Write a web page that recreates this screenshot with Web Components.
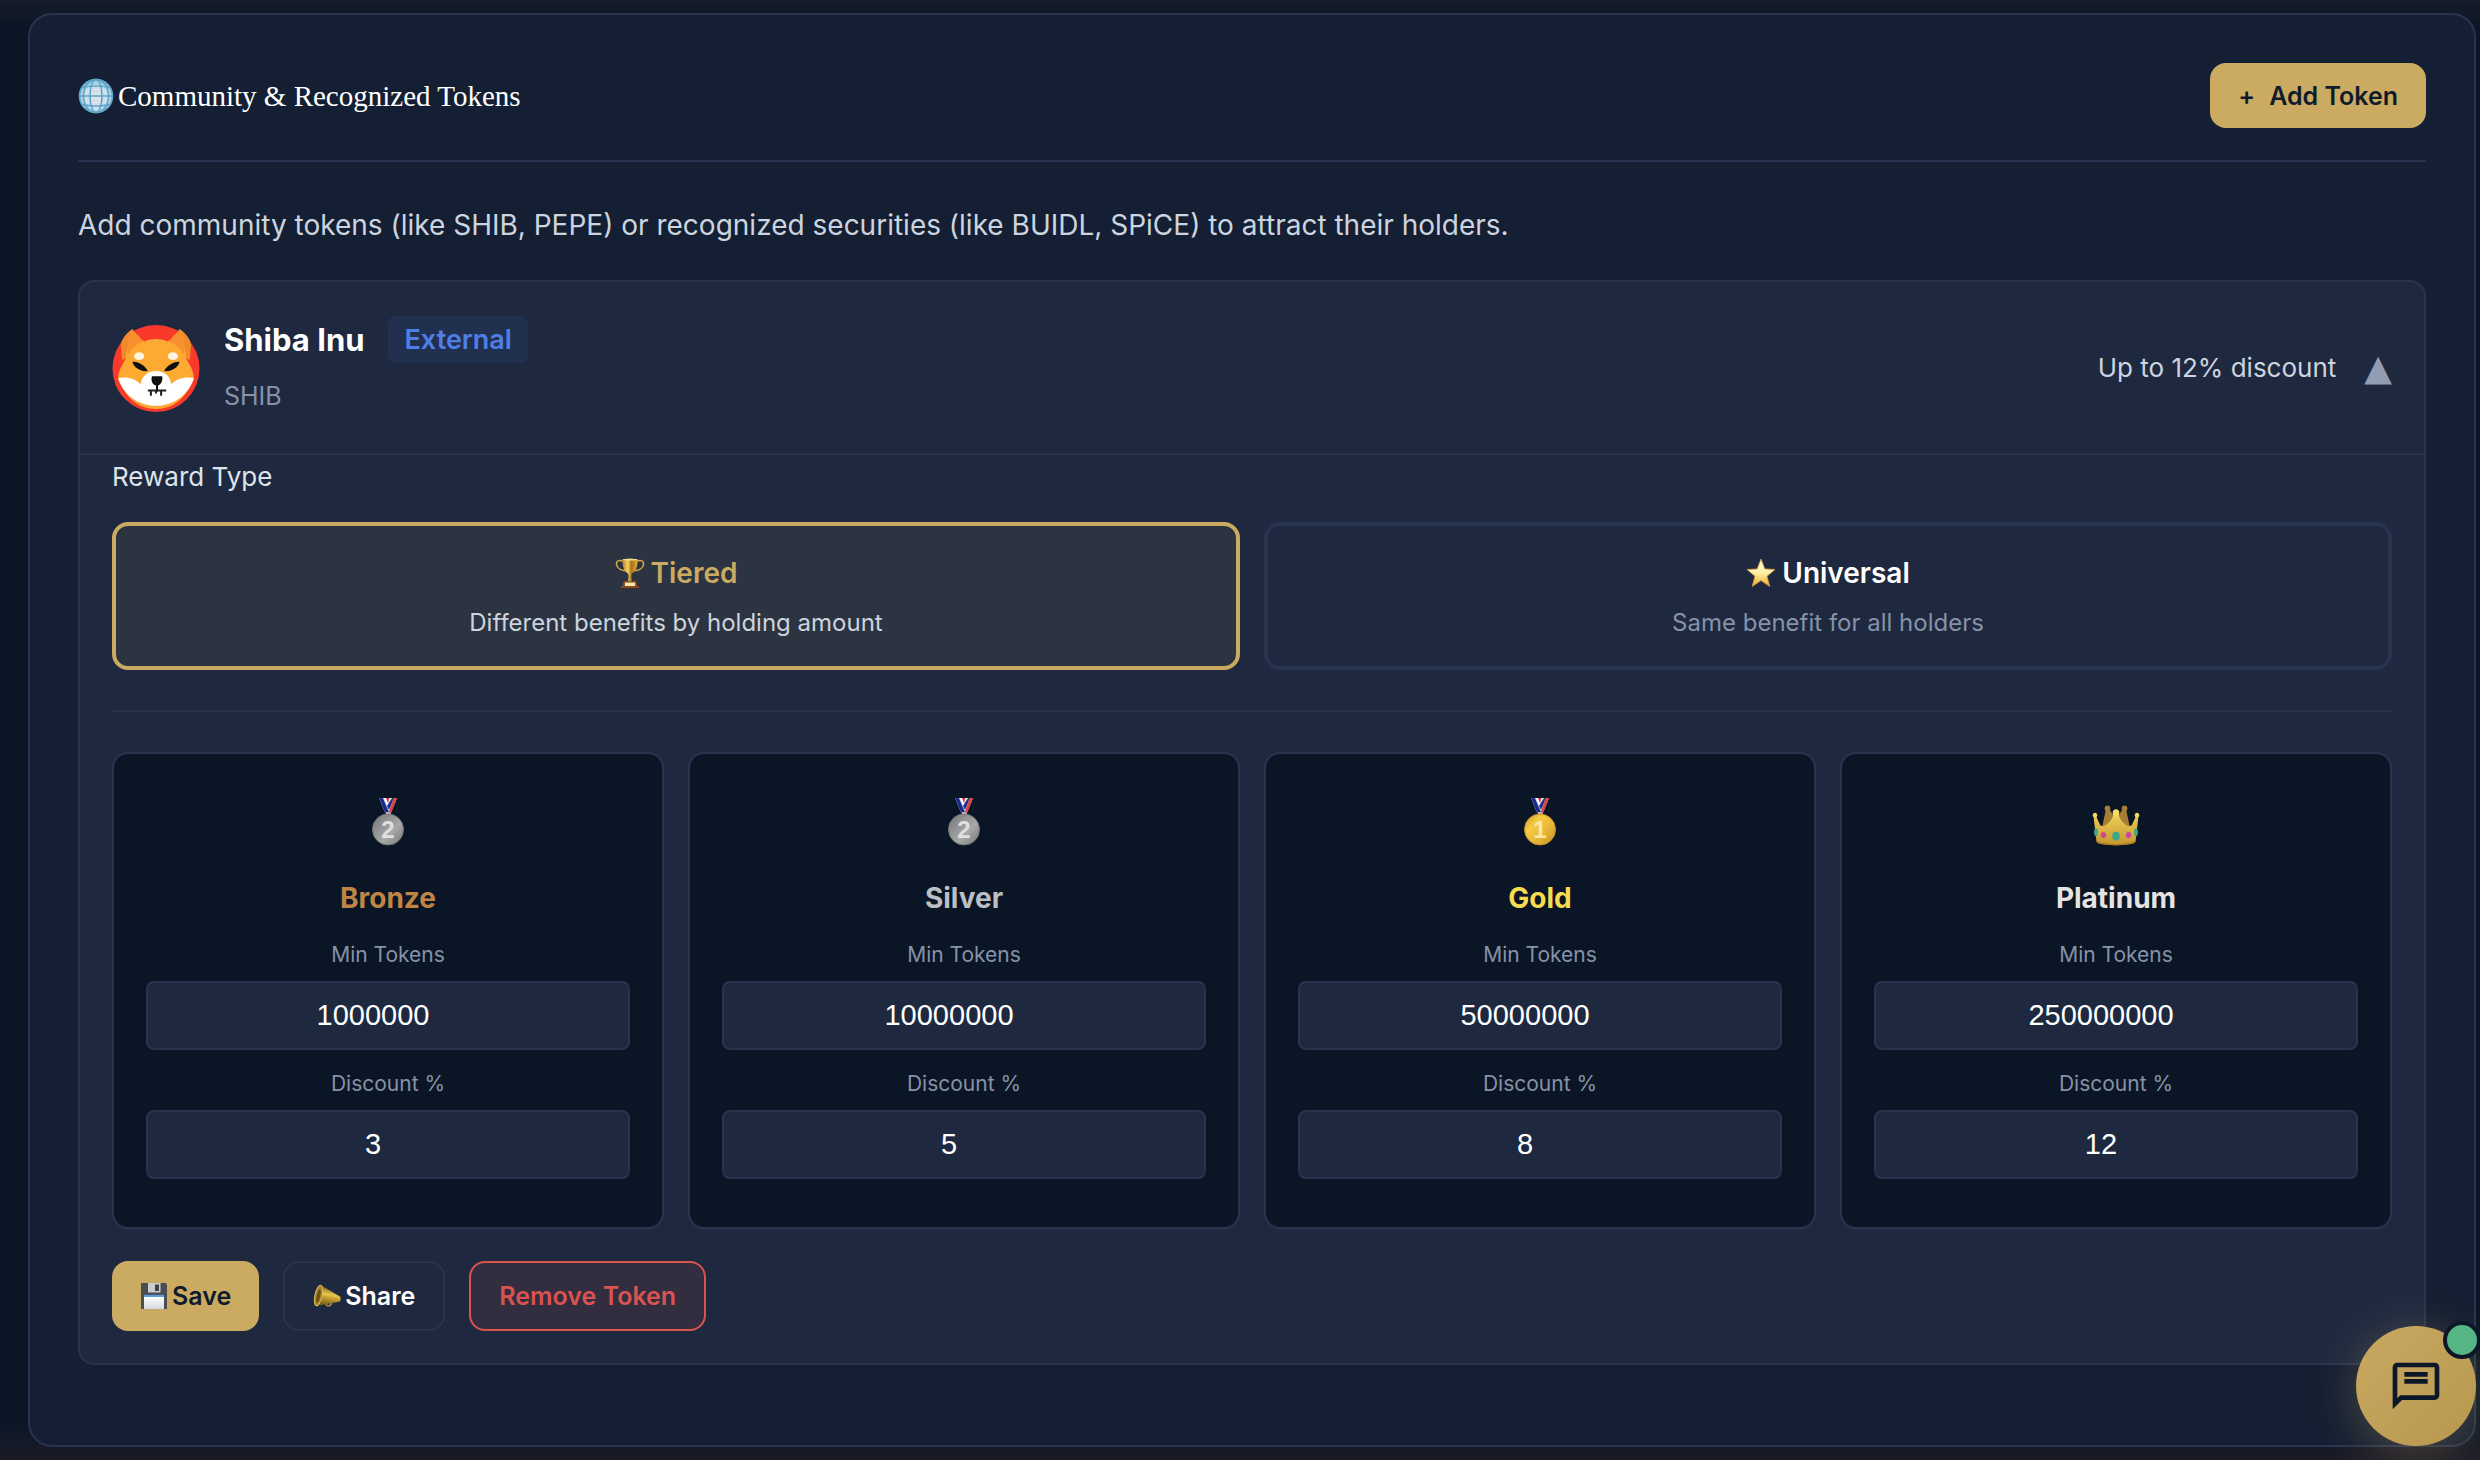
<!DOCTYPE html>
<html lang="en">
<head>
<meta charset="utf-8">
<meta name="viewport" content="width=device-width, initial-scale=1">
<title>Community &amp; Recognized Tokens</title>
<style>
  :root {
    --bg: #0a1626;
    --panel: #141f33;
    --card: #1e2940;
    --line: #28344f;
    --gold: #cbab62;
    --text: #ffffff;
    --soft: #ccd4df;
    --muted: #8592a8;
    --danger: #d9534f;
    --sans: Inter, "Liberation Sans", sans-serif;
    --serif: "Liberation Serif", serif;
  }
  * { box-sizing: border-box; }
  body {
    margin: 0;
    padding: 13px 4px 13px 28px;
    min-height: 100vh;
    background: linear-gradient(#171c28, transparent 28px), linear-gradient(to top, #1c1b28, transparent 36px), var(--bg);
    color: var(--text);
    font-family: var(--sans);
  }
</style>
</head>
<body>
<token-panel>
  <span slot="title">Community &amp; Recognized Tokens</span>
  <ui-button slot="action" variant="gold" wide><span>+</span><span>Add Token</span></ui-button>
  <p slot="intro">Add community tokens (like SHIB, PEPE) or recognized securities (like BUIDL, SPiCE) to attract their holders.</p>
  <token-card name="Shiba Inu" symbol="SHIB" origin="External" summary="Up to 12% discount">
    <reward-option slot="option" icon="trophy" label="Tiered" selected>Different benefits by holding amount</reward-option>
    <reward-option slot="option" icon="star" label="Universal">Same benefit for all holders</reward-option>
    <tier-card slot="tier" icon="silver" name="Bronze" color="#c08545" min="1000000" discount="3"></tier-card>
    <tier-card slot="tier" icon="silver" name="Silver" color="#bcbfc4" min="10000000" discount="5"></tier-card>
    <tier-card slot="tier" icon="gold" name="Gold" color="#f8db4f" min="50000000" discount="8"></tier-card>
    <tier-card slot="tier" icon="crown" name="Platinum" color="#e5e4e2" min="250000000" discount="12"></tier-card>
    <ui-button slot="action" variant="gold" tall><emoji-icon name="disk" size="28"></emoji-icon><span>Save</span></ui-button>
    <ui-button slot="action" variant="plain" tall><emoji-icon name="horn" size="28"></emoji-icon><span>Share</span></ui-button>
    <ui-button slot="action" variant="danger" tall><span>Remove Token</span></ui-button>
  </token-card>
</token-panel>
<chat-launcher></chat-launcher>

<script>
const ribbon = `
  <path fill="#f4f5f8" d="M11 0h18l-7 17h-4z"/>
  <path fill="#1c2a8c" d="M11 0h4l6 14-1 3h-2zM24 0h2l-5 12-2-4z"/>
  <path fill="#d8433c" d="M25.500 0H29l-6 15h-2.500zM18 0h3.500l-1.500 5z"/>
  <path fill="#b9b9b9" d="M18 14h4v4h-4z"/>`;

const medal = (light, mid, dark, ink, digit) => `
  <svg viewBox="0 0 40 48"><defs>
    <linearGradient id="g" x1="0" y1="0" x2="1" y2="1"><stop offset="0" stop-color="${dark}"/><stop offset=".3" stop-color="${mid}"/><stop offset=".6" stop-color="${light}"/><stop offset="1" stop-color="${dark}"/></linearGradient></defs>
    ${ribbon}
    <circle cx="20" cy="31.500" r="15.500" fill="url(#g)" stroke="${dark}" stroke-width="1"/>
    <text x="20" y="40" text-anchor="middle" font-family="Liberation Sans, sans-serif" font-weight="700" font-size="24" fill="${ink}">${digit}</text></svg>`;

const ICONS = {
  silver: medal('#a9a9a9', '#8f8f8f', '#757575', '#e0e0e0', 2),
  gold: medal('#e9b83a', '#f3cb42', '#c58f22', '#fbe9a0', 1),
  globe: `<svg viewBox="0 0 36 36"><defs><radialGradient id="g" cx=".5" cy=".55" r=".5"><stop offset="0" stop-color="#dde2e6"/><stop offset=".65" stop-color="#cfe0ea"/><stop offset="1" stop-color="#8fc9e4"/></radialGradient></defs>
    <circle cx="18" cy="18" r="17" fill="url(#g)"/>
    <g fill="none" stroke="#5fa5c9" stroke-width="1.600"><circle cx="18" cy="18" r="16.500"/><ellipse cx="18" cy="18" rx="6" ry="16.500"/><ellipse cx="18" cy="18" rx="12.500" ry="16.500"/><path d="M1.500 18h33M4 9.500q14-3 28 0M4 26.500q14 3 28 0"/></g></svg>`,
  trophy: `<svg viewBox="0 0 30 30"><defs><linearGradient id="g"><stop offset="0" stop-color="#b9801c"/><stop offset=".35" stop-color="#f7d267"/><stop offset=".6" stop-color="#a86f14"/><stop offset="1" stop-color="#e8b540"/></linearGradient></defs>
    <path fill="none" stroke="#d6a94c" stroke-width="1.500" d="M8.500 3.500C4 1.500 1 3 1.500 6.500S6 13 10.500 12.500M21.500 3.500C26 1.500 29 3 28.500 6.500S24 13 19.500 12.500"/>
    <path fill="url(#g)" d="M7.500 1h15c.3 7-1.500 12.500-5.500 14.500-.8 2-.8 5 .5 9.500h-5c1.300-4.500 1.300-7.500.5-9.500C9 13.500 7.200 8 7.500 1z"/>
    <ellipse cx="15" cy="1.600" rx="7.400" ry="1" fill="#f4dc92"/>
    <path fill="#f7e6b0" d="M9.500 24h11v4h-11z"/><path fill="#8a4a1c" d="M6 28h18v2H6zM9 23h12v1.500H9zM8 24.500h1.800V28H8zM20.200 24.500H22V28h-1.800z"/></svg>`,
  star: `<svg viewBox="0 0 30 30"><defs><linearGradient id="g" x1="0" y1="0" x2="0" y2="1"><stop offset="0" stop-color="#fffbe6"/><stop offset=".5" stop-color="#fdf0a6"/><stop offset="1" stop-color="#ecab2e"/></linearGradient></defs>
    <path fill="url(#g)" stroke="#d99a35" stroke-width=".8" stroke-linejoin="round" d="M15 1l3.800 9.900 10.200.6-8 6.700 2.800 10.300L15 22.600 6.200 28.500 9 18.200 1 11.500l10.200-.6z"/></svg>`,
  crown: `<svg viewBox="0 0 48 48"><defs><linearGradient id="g" x1="0" y1="0" x2="0" y2="1"><stop offset="0" stop-color="#f2d25a"/><stop offset="1" stop-color="#c3962f"/></linearGradient></defs>
    <g transform="translate(0 -1) scale(1 1.1)">
    <g fill="#a57f35"><path d="M5 20l5 8 4-17h3l7 9 7-9h3l4 17 5-8-3 20H8z"/><circle cx="15.500" cy="10.500" r="2.800"/><circle cx="32.500" cy="10.500" r="2.800"/></g>
    <path fill="url(#g)" d="M1.500 17h2.500l4 9c5 2 11-3 14.500-12h3c3.500 9 9.500 14 14.500 12l4-9h2.500L43.500 41c-3 4-36 4-39 0z"/>
    <g fill="#f6dc63"><circle cx="24" cy="14.500" r="3.300"/><circle cx="3" cy="16.500" r="2.200"/><circle cx="45" cy="16.500" r="2.200"/></g>
    <path fill="none" stroke="#a97c20" stroke-width="1" d="M5 40.500c6 3.500 32 3.500 38 0"/>
    <g fill="#3da883"><ellipse cx="24" cy="35.500" rx="3.800" ry="4"/><ellipse cx="4" cy="32" rx="1.900" ry="3.600"/><ellipse cx="44" cy="32" rx="1.900" ry="3.600"/></g>
    <g fill="#c9469c"><circle cx="11.500" cy="34.500" r="2.700"/><circle cx="36.500" cy="34.500" r="2.700"/></g></g></svg>`,
  disk: `<svg viewBox="0 0 28 28"><defs><linearGradient id="g" x1="0" y1="0" x2="0" y2="1"><stop offset="0" stop-color="#fff"/><stop offset="1" stop-color="#d5d9e0"/></linearGradient></defs>
    <path fill="#4a4d52" d="M1 1h24.500L27 2.500V27H1z"/><path fill="#c9ccd0" d="M8 1h12.500v9.500H8z"/><path fill="#3f4246" d="M15 2.500h4v6.500h-4z"/>
    <path fill="url(#g)" d="M4 14h20v13H4z"/><path fill="#5b9bdc" d="M4 12.800h20V15H4z"/></svg>`,
  horn: `<svg viewBox="0 0 28 28"><defs><linearGradient id="g" x1=".6" y1="0" x2=".4" y2="1"><stop offset=".1" stop-color="#7d5f14"/><stop offset=".45" stop-color="#e6c94e"/><stop offset=".6" stop-color="#c7a233"/><stop offset="1" stop-color="#6f5513"/></linearGradient></defs>
    <path fill="none" stroke="#a8863a" stroke-width="1.600" d="M12.500 21c1 4 5.500 4 6.500-1.500"/>
    <path fill="url(#g)" d="M7.500 3L27 14.500c.8 1.500.8 3.500 0 5L3.500 24z"/>
    <ellipse cx="5.500" cy="13.500" rx="3.600" ry="10.500" transform="rotate(12 5.500 13.500)" fill="#a8832a" stroke="#d9ba58" stroke-width="1"/>
    <ellipse cx="5.500" cy="14" rx="1.700" ry="7" transform="rotate(12 5.500 14)" fill="#6b4f12"/></svg>`,
  shiba: `<svg viewBox="0 0 86 86"><circle cx="43" cy="43.500" r="42.500" fill="#f93a2b"/>
    <path fill="#f08a2a" d="M20 5C12 10 7 19 9 24l1 12 20-18zM66 5c8 5 13 14 11 19l-1 12-20-18z"/>
    <path fill="#fdaa33" d="M18 14c8-1 14 3 14 3 7-3 15-3 22 0 0 0 6-4 14-3 2 6 4 14 5 21 4 6 7 13 7 18-8 20-20 30-37 30S14 73 6 53c0-5 3-12 7-18 1-7 3-15 5-21z"/>
    <path fill="#f9902e" d="M20 7c4 2 9 7 10 11-6 1-11 6-14 12-2-9 0-18 4-23zM66 7c-4 2-9 7-10 11 6 1 11 6 14 12 2-9 0-18-4-23z"/>
    <path fill="#fff" d="M6 53c8-2 17 0 22 6 1-8 7-13 15-13s14 5 15 13c5-6 14-8 22-6-4 14-18 27-37 27S10 67 6 53z"/>
    <g fill="#fff4dd"><ellipse cx="26.500" cy="31.500" rx="5" ry="3.800"/><ellipse cx="59.500" cy="31.500" rx="5" ry="3.800"/></g>
    <g fill="#111"><path d="M20 37c5-1 13 4 15 9-6 1-14-3-15-9zM66 37c-5-1-13 4-15 9 6 1 14-3 15-9z"/><path d="M39 51h10c1 4-1 8-4 9v6h-2v-6c-4-1-5-5-4-9z"/></g>
    <path fill="none" stroke="#222" stroke-width="2" d="M35 65h18M38 65v5M43 65v3M48 65v5"/></svg>`
};

const define = (name, template) => customElements.define(name, class extends HTMLElement {
  connectedCallback() {
    if (this.shadowRoot) return;
    const root = this.attachShadow({ mode: 'open' });
    root.innerHTML = '<style>*{box-sizing:border-box}</style>' + template(this);
  }
});

define('emoji-icon', el => `
  <style>
    :host { display: block; flex: none; width: ${el.getAttribute('size')}px; height: ${el.getAttribute('size')}px; }
    svg { display: block; width: 100%; height: 100%; overflow: visible; }
  </style>${ICONS[el.getAttribute('name')].replace('<svg', '<svg aria-hidden="true"')}`);

define('ui-button', el => `
  <style>
    :host { display: block; }
    button {
      display: flex; align-items: center; justify-content: center; gap: 4px;
      height: 65px; padding: 0 28px; border: 0; border-radius: 16px;
      font: 600 25px/40px var(--sans); cursor: pointer;
    }
    :host([wide]) button { gap: 14px; }
    :host([tall]) button { height: 70px; }
    .gold { background: var(--gold); color: #0f1b2a; }
    .plain { background: transparent; color: var(--text); border: 2px solid var(--line); }
    .danger { background: #332d40; color: var(--danger); border: 2px solid var(--danger); }
  </style>
  <button type="button" class="${el.getAttribute('variant')}"><slot></slot></button>`);

define('token-panel', () => `
  <style>
    :host { display: block; padding: 48px; background: var(--panel); border: 2px solid var(--line); border-radius: 24px; }
    header { display: flex; align-items: center; justify-content: space-between; padding-bottom: 32px; border-bottom: 2px solid var(--line); }
    h2 { display: flex; align-items: center; gap: 4px; margin: 0; font: 400 29px/48px var(--serif); color: var(--text); }
    .intro { margin: 40px 0 32px; font-size: 28px; line-height: 46px; color: var(--soft); }
    ::slotted(p) { margin: 0; }
    .list { padding-bottom: 32px; }
  </style>
  <header><h2><emoji-icon name="globe" size="36"></emoji-icon><slot name="title"></slot></h2><slot name="action"></slot></header>
  <div class="intro"><slot name="intro"></slot></div>
  <div class="list"><slot></slot></div>`);

define('token-card', el => `
  <style>
    :host { display: block; background: var(--card); border: 2px solid var(--line); border-radius: 16px; }
    header { display: flex; align-items: center; gap: 24px; padding: 32px; border-bottom: 2px solid var(--line); }
    .who { flex: 1; }
    .name { display: flex; align-items: center; gap: 24px; height: 51px; margin-bottom: 6px; }
    h3 { margin: 0; font-size: 31px; line-height: 51px; font-weight: 700; }
    .badge { padding: 0 16px; border-radius: 8px; background: #22304f; color: #4e7fe6; font-size: 27px; line-height: 47px; font-weight: 600; }
    .symbol { font-size: 25px; line-height: 50px; color: var(--muted); }
    .fold { display: flex; align-items: center; gap: 28px; }
    .summary { font-size: 26px; line-height: 42px; color: var(--soft); }
    .toggle { border: 0; padding: 0; background: none; color: #919db3; font: 36px/38px "DejaVu Sans", sans-serif; cursor: pointer; }
    .body { padding: 0 32px 32px; }
    .label { margin-bottom: 24px; font-size: 26px; line-height: 43px; color: #dfe4ea; }
    .options { display: grid; grid-template-columns: 1fr 1fr; gap: 24px; padding-bottom: 40px; border-bottom: 2px solid var(--line); }
    .tiers { display: grid; grid-template-columns: repeat(4, 1fr); gap: 24px; margin: 40px 0 32px; }
    .actions { display: flex; gap: 24px; }
  </style>
  <header>
    <emoji-icon name="shiba" size="88"></emoji-icon>
    <div class="who">
      <div class="name"><h3>${el.getAttribute('name')}</h3><span class="badge">${el.getAttribute('origin')}</span></div>
      <div class="symbol">${el.getAttribute('symbol')}</div>
    </div>
    <div class="fold">
      <span class="summary" id="summary">${el.getAttribute('summary')}</span>
      <button class="toggle" type="button" aria-expanded="true" aria-describedby="summary">▲</button>
    </div>
  </header>
  <div class="body">
    <div class="label" id="reward">Reward Type</div>
    <div class="options" role="group" aria-labelledby="reward"><slot name="option"></slot></div>
    <div class="tiers"><slot name="tier"></slot></div>
    <div class="actions"><slot name="action"></slot></div>
  </div>`);

define('reward-option', el => `
  <style>
    :host { display: block; }
    button {
      display: flex; flex-direction: column; align-items: center; gap: 8px;
      width: 100%; height: 148px; padding: 24px; border: 4px solid #27334f; border-radius: 16px;
      background: transparent; color: var(--muted); font: 400 24px/38px var(--sans); cursor: pointer;
    }
    .title { display: flex; align-items: center; gap: 6px; font-size: 28px; line-height: 46px; font-weight: 600; color: var(--text); }
    :host([selected]) button { border-color: var(--gold); background: #2c3441; color: var(--soft); }
    :host([selected]) .title { color: var(--gold); }
  </style>
  <button type="button" aria-pressed="${el.hasAttribute('selected')}">
    <span class="title"><emoji-icon name="${el.getAttribute('icon')}" size="30"></emoji-icon><span>${el.getAttribute('label')}</span></span>
    <span><slot></slot></span>
  </button>`);

define('tier-card', el => `
  <style>
    :host { display: flex; flex-direction: column; padding: 32px; background: var(--bg); border: 2px solid var(--line); border-radius: 16px; text-align: center; }
    .icon { display: flex; align-items: center; justify-content: center; height: 72px; margin-bottom: 16px; }
    h4 { margin: 0 0 14px; font-size: 28px; line-height: 49px; font-weight: 700; color: ${el.getAttribute('color')}; }
    label { margin-bottom: 8px; font-size: 21px; line-height: 36px; color: var(--muted); }
    input {
      width: 100%; height: 69px; margin: 0 0 16px; padding: 0 46px 0 16px;
      border: 2px solid var(--line); border-radius: 8px; background: var(--card); color: var(--text);
      font: 400 29px/40px "Liberation Sans", sans-serif; text-align: center; appearance: textfield;
    }
    input::-webkit-inner-spin-button, input::-webkit-outer-spin-button { appearance: none; margin: 0; }
  </style>
  <div class="icon"><emoji-icon name="${el.getAttribute('icon')}" size="48"></emoji-icon></div>
  <h4>${el.getAttribute('name')}</h4>
  <label for="min">Min Tokens</label><input id="min" type="number" value="${el.getAttribute('min')}">
  <label for="pct">Discount %</label><input id="pct" type="number" value="${el.getAttribute('discount')}">`);

define('chat-launcher', () => `
  <style>
    :host { position: fixed; right: 4px; bottom: 14px; }
    button {
      display: flex; align-items: center; justify-content: center; width: 120px; height: 120px; padding: 0;
      border: 0; border-radius: 50%; background: linear-gradient(135deg, #c9a961, #b8984f); color: #0c1828;
      box-shadow: 0 8px 48px rgba(201, 169, 97, .32); cursor: pointer;
    }
    svg { width: 56px; height: 56px; }
    .dot { position: absolute; top: -5px; right: -5px; width: 38px; height: 38px; border: 4px solid #0c1828; border-radius: 50%; background: #56b585; }
  </style>
  <button type="button" aria-label="Open chat">
    <svg viewBox="0 0 24 24" fill="currentColor" aria-hidden="true"><path d="M4 4h16v12H5.200L4 17.200V4m0-2c-1.100 0-2 .9-2 2v18l4-4h14c1.100 0 2-.9 2-2V4c0-1.100-.9-2-2-2H4zm3 4h10v2H7V6zm0 3h10v2H7V9z"/></svg>
  </button>
  <span class="dot"></span>`);
</script>
</body>
</html>
